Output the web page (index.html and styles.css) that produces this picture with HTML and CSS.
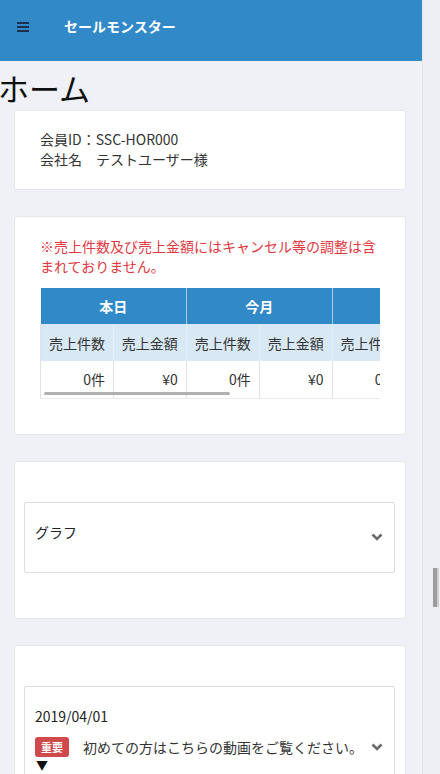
FILE: index.html
```html
<!DOCTYPE html>
<html lang="ja">
<head>
<meta charset="utf-8">
<title>ホーム</title>
<link rel="stylesheet" href="styles.css">
</head>
<body>
<div class="page">
  <main class="main">
    <header class="topbar">
      <span class="burger"><i></i><i></i><i></i></span>
      <span class="brand">セールモンスター</span>
    </header>
    <h1 class="title">ホーム</h1>

    <section class="card card-info">
      <p>会員ID：SSC-HOR000</p>
      <p>会社名　テストユーザー様</p>
    </section>

    <section class="card card-sales">
      <p class="note">※売上件数及び売上金額にはキャンセル等の調整は含まれておりません。</p>
      <div class="scroller">
        <table class="sales">
          <thead>
            <tr class="r1"><th colspan="2">本日</th><th colspan="2">今月</th><th colspan="2">前月</th></tr>
            <tr class="r2"><th>売上件数</th><th>売上金額</th><th>売上件数</th><th>売上金額</th><th>売上件数</th><th>売上金額</th></tr>
          </thead>
          <tbody>
            <tr class="r3"><td>0件</td><td>¥0</td><td>0件</td><td>¥0</td><td>0件</td><td>¥0</td></tr>
          </tbody>
        </table>
        <span class="hthumb"></span>
      </div>
    </section>

    <section class="card card-panel">
      <div class="panel panel-graph">
        <span class="panel-title">グラフ</span>
        <svg class="chev" width="12" height="8" viewBox="0 0 12 8"><path d="M1.5 1.5 L6 6 L10.5 1.5" fill="none" stroke="#6b6b6b" stroke-width="2.6"/></svg>
      </div>
    </section>

    <section class="card card-panel card-news">
      <div class="panel panel-news">
        <div class="date">2019/04/01</div>
        <div class="news-row">
          <span class="badge">重要</span>
          <span class="news-text">初めての方はこちらの動画をご覧ください。</span>
          <svg class="chev" width="12" height="8" viewBox="0 0 12 8"><path d="M1.5 1.5 L6 6 L10.5 1.5" fill="none" stroke="#6b6b6b" stroke-width="2.6"/></svg>
        </div>
        <div class="tri">▼</div>
      </div>
    </section>
  </main>
  <aside class="vscroll"><span class="vthumb"></span></aside>
</div>
</body>
</html>
```
FILE: styles.css
```css
* { box-sizing: border-box; }
html, body { margin: 0; padding: 0; }
body {
  background: #f0f1f6;
  font-family: "Noto Sans CJK JP", "Noto Sans", sans-serif;
  font-size: 14px;
  color: #333;
  overflow: hidden;
}
.page { display: flex; width: 440px; height: 774px; }
.main { flex: 0 0 422px; width: 422px; }
.vscroll {
  flex: 0 0 18px;
  background: #eeeff3;
  border-left: 1px solid #e4e5ea;
  display: flex;
  flex-direction: column;
}
.vthumb {
  display: block;
  margin-top: 568px;
  margin-left: 10px;
  width: 6px;
  height: 39px;
  background: linear-gradient(to right, #9c9c9c 0 4px, #cfcfd2 4px);
}
.topbar {
  height: 61px;
  background: #3289c7;
  display: flex;
  align-items: flex-start;
  padding: 16px 0 0 17px;
}
.burger {
  display: flex;
  flex-direction: column;
  gap: 2px;
  width: 12px;
  margin-top: 6px;
}
.burger i { display: block; height: 2px; background: #1d2f4d; }
.brand {
  margin-left: 35px;
  color: #fff;
  font-weight: 700;
  font-size: 14px;
  line-height: 20px;
}
.title {
  margin: 11px 0 6px -2px;
  font-size: 31px;
  line-height: 32px;
  font-weight: 400;
  color: #111;
}
.card {
  margin: 0 16px 26px 14px;
  background: #fff;
  border: 1px solid #e6e7eb;
  border-radius: 3px;
}
.card p { margin: 0; line-height: 20px; }
.card-info { padding: 18px 25px 20px; }
.card-sales { padding: 19px 25px 35px; }
.note { color: #e2383f; }
.scroller {
  position: relative;
  margin-top: 12px;
  width: 340px;
  overflow: hidden;
}
.sales {
  table-layout: fixed;
  border-collapse: collapse;
  width: 438px;
}
.sales th, .sales td {
  width: 73px;
  padding: 0;
  font-size: 14px;
  white-space: nowrap;
  overflow: hidden;
}
.r1 th {
  height: 36px;
  background: #3289c7;
  color: #fff;
  font-weight: 700;
  border-left: 1px solid #a9cbe6;
}
.r1 th:first-child { border-left: 0; }
.r2 th {
  height: 37px;
  background: #d8e9f5;
  font-weight: 400;
  color: #333;
  border-left: 1px solid #e6eef6;
}
.r2 th:first-child { border-left: 1px solid #dfe3e8; }
.r3 td {
  height: 37px;
  text-align: right;
  padding-right: 8px;
  border-left: 1px solid #dfe3e8;
  border-bottom: 1px solid #e8eaee;
}
.hthumb {
  position: absolute;
  left: 4px;
  bottom: 4px;
  width: 186px;
  height: 3px;
  border-radius: 2px;
  background: #b0b0b0;
}
.card-panel { padding: 40px 10px 45px 9px; }
.panel {
  border: 1px solid #dcdde1;
  border-radius: 2px;
  background: #fff;
}
.panel-graph {
  height: 71px;
  display: flex;
  align-items: center;
  justify-content: space-between;
  padding: 0 11px 0 10px;
}
.panel-title {
  align-self: flex-start;
  margin-top: 19px;
  line-height: 20px;
  color: #222;
}
.chev { display: block; }
.card-news { padding-bottom: 20px; }
.panel-news { padding: 19px 11px 10px 10px; }
.date { line-height: 20px; color: #222; }
.news-row {
  margin-top: 11px;
  height: 21px;
  display: flex;
  align-items: center;
}
.badge {
  width: 34px;
  height: 20px;
  border-radius: 3px;
  background: #d0494b;
  color: #fff;
  font-size: 11px;
  font-weight: 700;
  line-height: 20px;
  text-align: center;
}
.news-text {
  margin-left: 14px;
  flex: 1;
  line-height: 20px;
  color: #333;
}
.tri {
  margin-left: 1px;
  font-size: 12px;
  line-height: 14px;
  color: #111;
}
```
